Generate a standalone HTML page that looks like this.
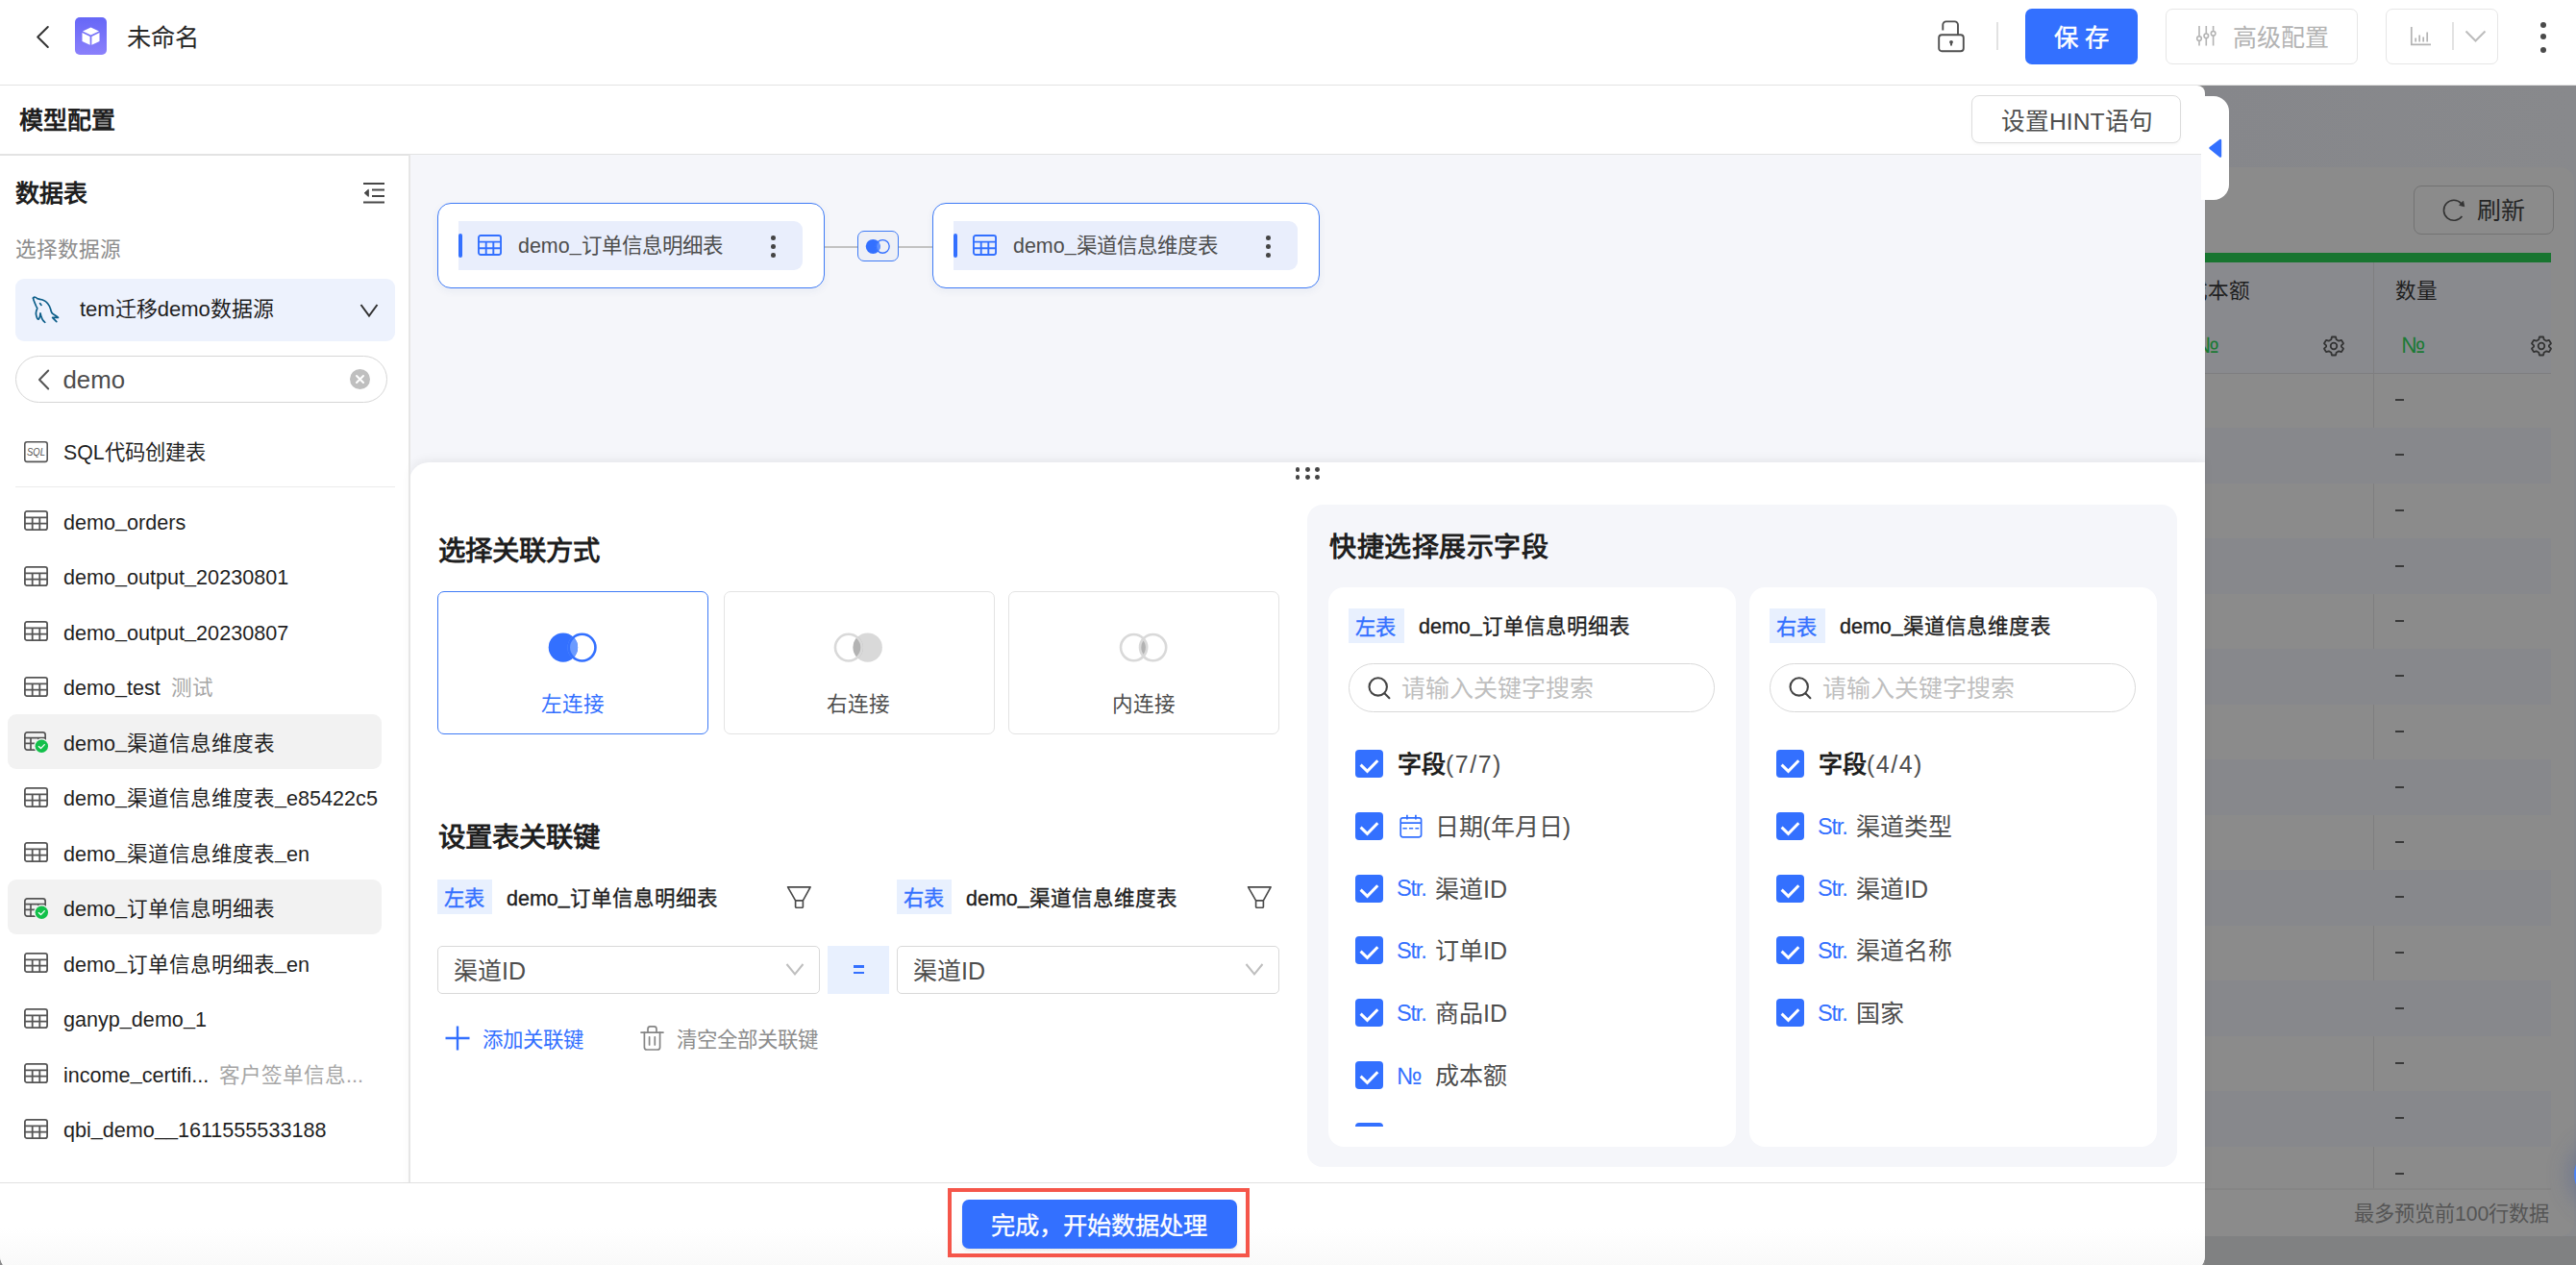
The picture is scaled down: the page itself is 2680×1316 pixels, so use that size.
<!DOCTYPE html>
<html lang="zh-CN">
<head>
<meta charset="utf-8">
<style>
*{box-sizing:border-box;margin:0;padding:0}
html,body{width:2680px;height:1316px;overflow:hidden}
body{position:relative;font-family:"Liberation Sans",sans-serif;background:#8a8a8b;color:#262626}
.a{position:absolute}
.t{position:absolute;white-space:nowrap;line-height:1}
svg{position:absolute;overflow:visible}
.u{position:relative;top:-2.5px}
</style>
</head>
<body>

<!-- ============ RIGHT DIMMED BACKGROUND ============ -->
<div class="a" id="bgright" style="left:2294px;top:89px;width:386px;height:1227px;background:#8a8a8a">
</div>
<div class="a" style="left:2294px;top:89px;width:386px;height:1227px;background:linear-gradient(90deg,#86878b,#88898c)"></div>
<div class="a" style="left:2294px;top:174px;width:384px;height:1112px;background:#8b8b8b;border-radius:0 14px 14px 0"></div>
<div class="a" style="left:2511px;top:193px;width:146px;height:51px;border-radius:8px;border:1.5px solid #737373"></div>
<svg style="left:2538px;top:204px" width="30" height="30" viewBox="0 0 30 30" fill="none" stroke="#333" stroke-width="1.6"><path d="M22.6 7.6 A10.5 10.5 0 1 0 23.4 21"/><path d="M25.8 10.8 L20.6 9.4 L24.6 5.2 Z" fill="#333" stroke-width="0.8" stroke-linejoin="round"/></svg>
<div class="t" style="left:2577px;top:207px;font-size:25px;color:#262626">刷新</div>
<div class="a" style="left:2294px;top:263px;width:360px;height:10px;background:#187530"></div>
<div class="a" style="left:2294px;top:273px;width:360px;height:115px;background:#898a8e"></div>
<div class="a" style="left:2294px;top:388px;width:360px;height:1px;background:#7e7e80"></div>
<div class="a" style="left:2469px;top:273px;width:1px;height:963px;background:#7f7f80"></div>
<div class="t" style="left:2275px;top:291.5px;font-size:21.6px;color:#1f1f1f">成本额</div>
<div class="t" style="left:2492px;top:291.5px;font-size:21.6px;color:#1f1f1f">数量</div>
<div class="t" style="left:2283.5px;top:348px;font-size:23.5px;color:#1c7a35">№</div>
<div class="t" style="left:2498px;top:348px;font-size:23.5px;color:#1c7a35">№</div>
<svg style="left:2417px;top:349px" width="22" height="22" viewBox="0 0 22 22" fill="none" stroke="#333" stroke-width="1.8" stroke-linejoin="round"><path d="M9 1.5 H13 L13.7 4.3 L16.2 5.7 L19 4.9 L21 8.3 L18.9 10.3 V11.7 L21 13.7 L19 17.1 L16.2 16.3 L13.7 17.7 L13 20.5 H9 L8.3 17.7 L5.8 16.3 L3 17.1 L1 13.7 L3.1 11.7 V10.3 L1 8.3 L3 4.9 L5.8 5.7 L8.3 4.3 Z"/><circle cx="11" cy="11" r="3.3"/></svg>
<svg style="left:2633px;top:349px" width="22" height="22" viewBox="0 0 22 22" fill="none" stroke="#333" stroke-width="1.8" stroke-linejoin="round"><path d="M9 1.5 H13 L13.7 4.3 L16.2 5.7 L19 4.9 L21 8.3 L18.9 10.3 V11.7 L21 13.7 L19 17.1 L16.2 16.3 L13.7 17.7 L13 20.5 H9 L8.3 17.7 L5.8 16.3 L3 17.1 L1 13.7 L3.1 11.7 V10.3 L1 8.3 L3 4.9 L5.8 5.7 L8.3 4.3 Z"/><circle cx="11" cy="11" r="3.3"/></svg>
<div class="a" style="left:2492px;top:415px;width:9px;height:2px;background:#3a3a3a"></div>
<div class="a" style="left:2294px;top:445.0px;width:360px;height:57.5px;background:#87888c"></div>
<div class="a" style="left:2492px;top:472px;width:9px;height:2px;background:#3a3a3a"></div>
<div class="a" style="left:2492px;top:530px;width:9px;height:2px;background:#3a3a3a"></div>
<div class="a" style="left:2294px;top:560.0px;width:360px;height:57.5px;background:#87888c"></div>
<div class="a" style="left:2492px;top:588px;width:9px;height:2px;background:#3a3a3a"></div>
<div class="a" style="left:2492px;top:645px;width:9px;height:2px;background:#3a3a3a"></div>
<div class="a" style="left:2294px;top:675.0px;width:360px;height:57.5px;background:#87888c"></div>
<div class="a" style="left:2492px;top:702px;width:9px;height:2px;background:#3a3a3a"></div>
<div class="a" style="left:2492px;top:760px;width:9px;height:2px;background:#3a3a3a"></div>
<div class="a" style="left:2294px;top:790.0px;width:360px;height:57.5px;background:#87888c"></div>
<div class="a" style="left:2492px;top:818px;width:9px;height:2px;background:#3a3a3a"></div>
<div class="a" style="left:2492px;top:875px;width:9px;height:2px;background:#3a3a3a"></div>
<div class="a" style="left:2294px;top:905.0px;width:360px;height:57.5px;background:#87888c"></div>
<div class="a" style="left:2492px;top:932px;width:9px;height:2px;background:#3a3a3a"></div>
<div class="a" style="left:2492px;top:990px;width:9px;height:2px;background:#3a3a3a"></div>
<div class="a" style="left:2294px;top:1020.0px;width:360px;height:57.5px;background:#87888c"></div>
<div class="a" style="left:2492px;top:1048px;width:9px;height:2px;background:#3a3a3a"></div>
<div class="a" style="left:2492px;top:1105px;width:9px;height:2px;background:#3a3a3a"></div>
<div class="a" style="left:2294px;top:1135.0px;width:360px;height:57.5px;background:#87888c"></div>
<div class="a" style="left:2492px;top:1162px;width:9px;height:2px;background:#3a3a3a"></div>
<div class="a" style="left:2492px;top:1220px;width:9px;height:2px;background:#3a3a3a"></div>
<div class="a" style="left:2294px;top:1236px;width:360px;height:1px;background:#7e7e7e"></div>
<div class="a" style="left:2294px;top:1236px;width:360px;height:2px;background:#858585"></div>
<div class="t" style="left:2449px;top:1252px;font-size:21.2px;color:#555">最多预览前100行数据</div>
<div class="a" style="left:2294px;top:1286px;width:386px;height:30px;background:#808182"></div>

<div class="a" style="left:2678px;top:1191.5px;width:60px;height:60px;border-radius:50%;background:#4a82f6;box-shadow:0 0 22px 6px rgba(70,90,150,0.35)"></div>

<!-- ============ TOP HEADER ============ -->
<div class="a" style="left:0;top:0;width:2680px;height:89px;background:#fff;border-bottom:1px solid #e3e3e3"></div>
<!-- back chevron -->
<svg style="left:36px;top:25px" width="18" height="28" viewBox="0 0 18 28"><path d="M13.8 3 L3.2 13.5 L13.8 24" fill="none" stroke="#333" stroke-width="2" stroke-linecap="round" stroke-linejoin="round"/></svg>
<!-- logo -->
<div class="a" style="left:78px;top:18px;width:33px;height:39px;border-radius:5px;background:linear-gradient(180deg,#6667f7 0%,#8b80fb 100%)"></div>
<svg style="left:84px;top:27px" width="21" height="21" viewBox="0 0 21 21">
 <path d="M10.5 1.5 L19 5.5 L10.5 9.5 L2 5.5 Z" fill="#fff"/>
 <path d="M1.5 7 L9.6 10.9 L9.6 19.8 L1.5 16 Z" fill="#fff"/>
 <path d="M19.5 7 L11.4 10.9 L11.4 19.8 L19.5 16 Z" fill="#fff"/>
</svg>
<div class="t" style="left:131.5px;top:26.5px;font-size:25.3px;color:#262626">未命名</div>

<!-- lock -->
<svg style="left:2014px;top:20px" width="32" height="36" viewBox="0 0 32 36" fill="none" stroke="#505050" stroke-width="1.9">
 <path d="M7.3 11.6 V5.8 A3.4 3.4 0 0 1 10.7 2.4 H19.6 A3.4 3.4 0 0 1 23 5.8 V16.2"/>
 <rect x="3.2" y="16.2" width="25.6" height="17" rx="3"/>
 <circle cx="16" cy="23.8" r="1.9" fill="#505050" stroke="none"/>
 <path d="M16 24 V27.6" stroke-width="1.9"/>
</svg>
<div class="a" style="left:2077px;top:23px;width:2px;height:29px;background:#e2e2e2"></div>
<!-- save -->
<div class="a" style="left:2107px;top:9px;width:117px;height:58px;border-radius:7px;background:#3370ff"></div>
<div class="t" style="left:2137px;top:26.5px;font-size:25.3px;color:#fff;letter-spacing:7px;-webkit-text-stroke:0.5px #fff">保存</div>
<!-- advanced config -->
<div class="a" style="left:2253px;top:9px;width:200px;height:58px;border-radius:7px;border:1.5px solid #e6e6e6;background:#fff"></div>
<svg style="left:2284px;top:26px" width="24" height="22" viewBox="0 0 24 22" fill="none" stroke="#b3b3b3" stroke-width="1.6">
 <path d="M4 1 V21.5 M11.3 1 V21.5 M18.6 1 V21.5"/>
 <circle cx="4" cy="14" r="2.3" fill="#fff"/><circle cx="11.3" cy="11.3" r="2.3" fill="#fff"/><circle cx="18.6" cy="8.8" r="2.3" fill="#fff"/>
</svg>
<div class="t" style="left:2323px;top:27px;font-size:25px;color:#b3b3b3">高级配置</div>
<!-- chart button -->
<div class="a" style="left:2482px;top:9px;width:117px;height:58px;border-radius:7px;border:1.5px solid #e6e6e6;background:#fff"></div>
<svg style="left:2507px;top:27px" width="23" height="21" viewBox="0 0 23 21" fill="none" stroke="#b3b3b3" stroke-width="1.7">
 <path d="M1.8 1 V19.3 H22"/><path d="M6.2 12.5 V16.5 M10.2 9.5 V16.5 M14.2 11.5 V16.5 M18.2 6.5 V16.5"/>
</svg>
<div class="a" style="left:2551px;top:23px;width:2px;height:29px;background:#e2e2e2"></div>
<svg style="left:2564px;top:31px" width="23" height="13" viewBox="0 0 23 13"><path d="M1.5 1.5 L11.5 11.5 L21.5 1.5" fill="none" stroke="#bdbdbd" stroke-width="2"/></svg>
<!-- more -->
<div class="a" style="left:2642.5px;top:22.5px;width:6.2px;height:6.2px;border-radius:50%;background:#4a4a4a"></div>
<div class="a" style="left:2642.5px;top:35.3px;width:6.2px;height:6.2px;border-radius:50%;background:#4a4a4a"></div>
<div class="a" style="left:2642.5px;top:48.5px;width:6.2px;height:6.2px;border-radius:50%;background:#4a4a4a"></div>

<!-- ============ DIALOG ============ -->
<div class="a" id="dlg" style="left:0;top:89px;width:2294px;height:1235px;background:#fff;border-radius:0 8px 18px 18px;overflow:hidden">
</div>
<!-- dialog header -->
<div class="t" style="left:20px;top:113px;font-size:25px;font-weight:700;color:#1f1f1f">模型配置</div>
<div class="a" style="left:2051px;top:99px;width:218px;height:50px;border-radius:8px;border:1.5px solid #dcdcdc;background:#fff;box-shadow:0 2px 3px rgba(0,0,0,0.03)"></div>
<div class="t" style="left:2082px;top:114.5px;font-size:24.7px;color:#4d4d4d">设置HINT语句</div>
<div class="a" style="left:0;top:160px;width:2290px;height:1.5px;background:#e3e3e3"></div>

<!-- canvas bg -->
<div class="a" style="left:426px;top:161px;width:1868px;height:1069px;background:#f5f6fa"></div>

<div class="a" style="left:455px;top:211px;width:403px;height:89px;border-radius:14px;border:1.5px solid #3f7bf6;background:#fff;box-shadow:0 3px 8px rgba(40,70,140,0.06)"></div>
<div class="a" style="left:477px;top:230px;width:358px;height:51px;border-radius:0 9px 9px 0;background:#e9eefc"></div>
<div class="a" style="left:477px;top:243px;width:4px;height:25px;border-radius:2px;background:#3370ff"></div>
<svg style="left:497px;top:244px" width="25" height="22" viewBox="0 0 25 22" fill="none" stroke="#3370ff" stroke-width="1.9"><rect x="0.95" y="0.95" width="23.1" height="20.1" rx="2.2"/><path d="M0.95 7.6 H24 M0.95 14.3 H24 M8.7 7.6 V21 M16.3 7.6 V21"/></svg>
<div class="t" style="left:539px;top:246px;font-size:21.45px;color:#4d4d4d">demo<span class="u">_</span>订单信息明细表</div>
<div class="a" style="left:802px;top:245px;width:4.6px;height:4.6px;border-radius:50%;background:#444"></div>
<div class="a" style="left:802px;top:254px;width:4.6px;height:4.6px;border-radius:50%;background:#444"></div>
<div class="a" style="left:802px;top:263px;width:4.6px;height:4.6px;border-radius:50%;background:#444"></div>
<div class="a" style="left:970px;top:211px;width:403px;height:89px;border-radius:14px;border:1.5px solid #3f7bf6;background:#fff;box-shadow:0 3px 8px rgba(40,70,140,0.06)"></div>
<div class="a" style="left:992px;top:230px;width:358px;height:51px;border-radius:0 9px 9px 0;background:#e9eefc"></div>
<div class="a" style="left:992px;top:243px;width:4px;height:25px;border-radius:2px;background:#3370ff"></div>
<svg style="left:1012px;top:244px" width="25" height="22" viewBox="0 0 25 22" fill="none" stroke="#3370ff" stroke-width="1.9"><rect x="0.95" y="0.95" width="23.1" height="20.1" rx="2.2"/><path d="M0.95 7.6 H24 M0.95 14.3 H24 M8.7 7.6 V21 M16.3 7.6 V21"/></svg>
<div class="t" style="left:1054px;top:246px;font-size:21.45px;color:#4d4d4d">demo<span class="u">_</span>渠道信息维度表</div>
<div class="a" style="left:1317px;top:245px;width:4.6px;height:4.6px;border-radius:50%;background:#444"></div>
<div class="a" style="left:1317px;top:254px;width:4.6px;height:4.6px;border-radius:50%;background:#444"></div>
<div class="a" style="left:1317px;top:263px;width:4.6px;height:4.6px;border-radius:50%;background:#444"></div>
<div class="a" style="left:858px;top:256px;width:112px;height:1.5px;background:#c2c2c2"></div>
<div class="a" style="left:892px;top:240px;width:43px;height:32px;border-radius:7px;border:1.5px solid #3f7bf6;background:#eef0f6"></div>
<svg style="left:895px;top:243px" width="34" height="28" viewBox="0 0 34 28"><defs><clipPath id="cj"><circle cx="13.3" cy="13.4" r="7.5"/></clipPath></defs><circle cx="13.3" cy="13.4" r="7.5" fill="#3370ff"/><circle cx="23.3" cy="13.4" r="7.5" fill="#5d90ff" clip-path="url(#cj)"/><circle cx="23.3" cy="13.4" r="6.85" fill="none" stroke="#3370ff" stroke-width="1.3"/></svg>
<div class="a" style="left:426px;top:481px;width:1868px;height:760px;border-radius:20px 0 0 0;background:#fff;box-shadow:0 -4px 10px rgba(0,0,0,0.05)"></div>
<div class="a" style="left:1347.50px;top:485.8px;width:4.8px;height:4.8px;border-radius:50%;background:#444"></div>
<div class="a" style="left:1357.95px;top:485.8px;width:4.8px;height:4.8px;border-radius:50%;background:#444"></div>
<div class="a" style="left:1368.40px;top:485.8px;width:4.8px;height:4.8px;border-radius:50%;background:#444"></div>
<div class="a" style="left:1347.50px;top:494.0px;width:4.8px;height:4.8px;border-radius:50%;background:#444"></div>
<div class="a" style="left:1357.95px;top:494.0px;width:4.8px;height:4.8px;border-radius:50%;background:#444"></div>
<div class="a" style="left:1368.40px;top:494.0px;width:4.8px;height:4.8px;border-radius:50%;background:#444"></div>
<div class="t" style="left:455.5px;top:559px;font-size:28.4px;font-weight:700;color:#1f1f1f">选择关联方式</div>
<div class="a" style="left:455px;top:615px;width:282px;height:149px;border-radius:7px;border:1.5px solid #3f7bf6;background:#fff"></div>
<div class="t" style="left:562.5px;top:721.5px;font-size:21.6px;color:#3370ff">左连接</div>
<div class="a" style="left:752.5px;top:615px;width:282px;height:149px;border-radius:7px;border:1.5px solid #e3e3e3;background:#fff"></div>
<div class="t" style="left:860.0px;top:721.5px;font-size:21.6px;color:#4d4d4d">右连接</div>
<div class="a" style="left:1049px;top:615px;width:282px;height:149px;border-radius:7px;border:1.5px solid #e3e3e3;background:#fff"></div>
<div class="t" style="left:1156.5px;top:721.5px;font-size:21.6px;color:#4d4d4d">内连接</div>
<svg style="left:560px;top:648px" width="70" height="52" viewBox="0 0 70 52"><defs><clipPath id="v1"><circle cx="25.9" cy="25.6" r="15.2"/></clipPath></defs><circle cx="25.9" cy="25.6" r="15.2" fill="#3370ff"/><circle cx="45.6" cy="25.6" r="15.15" fill="#6b9bff" clip-path="url(#v1)"/><circle cx="45.6" cy="25.6" r="13.85" fill="none" stroke="#3370ff" stroke-width="2.6"/></svg>
<svg style="left:857px;top:648px" width="70" height="52" viewBox="0 0 70 52"><defs><clipPath id="v2"><circle cx="45.7" cy="25.6" r="15.2"/></clipPath></defs><circle cx="45.7" cy="25.6" r="15.2" fill="#d9d9d9"/><circle cx="25.8" cy="25.6" r="15.15" fill="#b3b3b3" clip-path="url(#v2)"/><circle cx="25.8" cy="25.6" r="13.85" fill="none" stroke="#d9d9d9" stroke-width="2.6"/></svg>
<svg style="left:1155px;top:648px" width="70" height="52" viewBox="0 0 70 52"><defs><clipPath id="v3"><circle cx="44.6" cy="25.6" r="13.9"/></clipPath></defs><circle cx="24.6" cy="25.6" r="13.9" fill="#b3b3b3" clip-path="url(#v3)"/><circle cx="24.6" cy="25.6" r="13.6" fill="none" stroke="#d9d9d9" stroke-width="2.6"/><circle cx="44.6" cy="25.6" r="13.6" fill="none" stroke="#d9d9d9" stroke-width="2.6"/></svg>
<div class="t" style="left:456px;top:856.5px;font-size:28.4px;font-weight:700;color:#1f1f1f">设置表关联键</div>
<div class="a" style="left:455px;top:915px;width:57px;height:36px;background:#e8f0fe"></div>
<div class="t" style="left:462px;top:924.0px;font-size:21.2px;color:#3370ff;-webkit-text-stroke:0.4px #3370ff">左表</div>
<div class="t" style="left:527px;top:925.0px;font-size:21.5px;color:#1f1f1f;-webkit-text-stroke:0.35px #1f1f1f">demo<span class="u">_</span>订单信息明细表</div>
<svg style="left:818px;top:920px" width="26" height="26" viewBox="0 0 26 26" fill="none" stroke="#4a4a4a" stroke-width="1.65" stroke-linejoin="round"><path d="M1.6 2.8 H25.1 L17.4 16.8 V23.6 A0.6 0.6 0 0 1 16.8 24.2 H10.2 A0.6 0.6 0 0 1 9.6 23.6 V16.8 Z M9.6 16.8 H17.4"/></svg>
<div class="a" style="left:933px;top:915px;width:57px;height:36px;background:#e8f0fe"></div>
<div class="t" style="left:940px;top:924.0px;font-size:21.2px;color:#3370ff;-webkit-text-stroke:0.4px #3370ff">右表</div>
<div class="t" style="left:1005px;top:925.0px;font-size:21.5px;color:#1f1f1f;-webkit-text-stroke:0.35px #1f1f1f">demo<span class="u">_</span>渠道信息维度表</div>
<svg style="left:1297px;top:920px" width="26" height="26" viewBox="0 0 26 26" fill="none" stroke="#4a4a4a" stroke-width="1.65" stroke-linejoin="round"><path d="M1.6 2.8 H25.1 L17.4 16.8 V23.6 A0.6 0.6 0 0 1 16.8 24.2 H10.2 A0.6 0.6 0 0 1 9.6 23.6 V16.8 Z M9.6 16.8 H17.4"/></svg>
<div class="a" style="left:455px;top:984px;width:398px;height:50px;border-radius:5px;border:1.5px solid #d9d9d9;background:#fff"></div>
<div class="t" style="left:472.0px;top:998px;font-size:25px;color:#4d4d4d">渠道ID</div>
<svg style="left:817px;top:1001px" width="20" height="15" viewBox="0 0 20 15"><path d="M1.5 2 L10 12.5 L18.5 2" fill="none" stroke="#bfbfbf" stroke-width="2"/></svg>
<div class="a" style="left:933px;top:984px;width:398px;height:50px;border-radius:5px;border:1.5px solid #d9d9d9;background:#fff"></div>
<div class="t" style="left:950.0px;top:998px;font-size:25px;color:#4d4d4d">渠道ID</div>
<svg style="left:1295px;top:1001px" width="20" height="15" viewBox="0 0 20 15"><path d="M1.5 2 L10 12.5 L18.5 2" fill="none" stroke="#bfbfbf" stroke-width="2"/></svg>
<div class="a" style="left:861px;top:984px;width:64px;height:50px;background:#e8f0fe"></div>
<div class="a" style="left:887.5px;top:1004px;width:11px;height:2.5px;background:#3370ff"></div><div class="a" style="left:887.5px;top:1010.5px;width:11px;height:2.5px;background:#3370ff"></div>
<svg style="left:462px;top:1066px" width="28" height="28" viewBox="0 0 28 28"><path d="M14 1.5 V26.5 M1.5 14 H26.5" stroke="#3370ff" stroke-width="2.4"/></svg>
<div class="t" style="left:501.5px;top:1072px;font-size:21.4px;color:#3370ff">添加关联键</div>
<svg style="left:655px;top:1060px" width="45" height="40" viewBox="0 0 45 40" fill="none" stroke="#858585" stroke-width="1.7" stroke-linecap="round"><path d="M12 14.1 H35"/><path d="M19 14 V10.5 A2.6 2.6 0 0 1 21.6 7.9 H25.4 A2.6 2.6 0 0 1 28 10.5 V14"/><path d="M15.4 14.1 V29.4 A2.6 2.6 0 0 0 18 32 H29 A2.6 2.6 0 0 0 31.6 29.4 V14.1"/><path d="M20.6 18.8 V27 M26.3 18.8 V27"/></svg>
<div class="t" style="left:704px;top:1072px;font-size:21.4px;color:#8c8c8c">清空全部关联键</div>
<div class="a" style="left:1360px;top:525px;width:905px;height:689px;border-radius:16px;background:#f5f6fa"></div>
<div class="t" style="left:1383px;top:556px;font-size:28px;letter-spacing:0.5px;font-weight:700;color:#1f1f1f">快捷选择展示字段</div>
<div class="a" style="left:1382px;top:611px;width:424px;height:582px;border-radius:16px;background:#fff;overflow:hidden" id="card左表">
</div>
<div class="a" style="left:1403px;top:633px;width:58px;height:36px;background:#e8f0fe"></div>
<div class="t" style="left:1410px;top:642.0px;font-size:21.2px;color:#3370ff;-webkit-text-stroke:0.4px #3370ff">左表</div>
<div class="t" style="left:1476px;top:642.0px;font-size:21.5px;color:#1f1f1f;-webkit-text-stroke:0.35px #1f1f1f">demo<span class="u">_</span>订单信息明细表</div>
<div class="a" style="left:1403px;top:690px;width:381px;height:51px;border-radius:26px;border:1.5px solid #d9d9d9;background:#fff"></div>
<svg style="left:1422px;top:703px" width="25" height="25" viewBox="0 0 25 25" fill="none" stroke="#444" stroke-width="2.1" stroke-linecap="round"><circle cx="11.7" cy="11.4" r="9.2"/><path d="M18.6 18.4 L23.4 23.2"/></svg>
<div class="t" style="left:1458px;top:704px;font-size:25px;color:#bfbfbf">请输入关键字搜索</div>
<div class="a" style="left:1410px;top:780px;width:29px;height:29px;border-radius:4px;background:#3370ff"></div><svg style="left:1410px;top:780px" width="29" height="29" viewBox="0 0 29 29"><path d="M5.6 15.6 L12.5 22.3 L23.3 11.2" fill="none" stroke="#fff" stroke-width="3"/></svg>
<div class="t" style="left:1454px;top:783px;font-size:25px;color:#1f1f1f"><b style="font-weight:700">字段</b><span style="color:#4d4d4d;letter-spacing:1.5px">(7/7)</span></div>
<div class="a" style="left:1410px;top:845.0px;width:29px;height:29px;border-radius:4px;background:#3370ff"></div><svg style="left:1410px;top:845.0px" width="29" height="29" viewBox="0 0 29 29"><path d="M5.6 15.6 L12.5 22.3 L23.3 11.2" fill="none" stroke="#fff" stroke-width="3"/></svg>
<svg style="left:1456px;top:847.0px" width="25" height="25" viewBox="0 0 25 25" fill="none" stroke="#3370ff" stroke-width="1.7"><rect x="1.2" y="3.9" width="21.4" height="19.9" rx="2.2"/><path d="M1.2 9.2 H22.6 M7.9 0.8 V5.6 M16.9 0.8 V5.6"/><path d="M3.4 14.8 H7.8 M10 14.8 H14.2 M16.4 14.8 H20.2" stroke-width="1.5"/></svg>
<div class="t" style="left:1492.5px;top:848.0px;font-size:25px;color:#4d4d4d">日期(年月日)</div>
<div class="a" style="left:1410px;top:909.7px;width:29px;height:29px;border-radius:4px;background:#3370ff"></div><svg style="left:1410px;top:909.7px" width="29" height="29" viewBox="0 0 29 29"><path d="M5.6 15.6 L12.5 22.3 L23.3 11.2" fill="none" stroke="#fff" stroke-width="3"/></svg>
<div class="t" style="left:1453px;top:913.2px;font-size:23.5px;color:#3370ff;letter-spacing:-1.2px">Str.</div>
<div class="t" style="left:1493.0px;top:912.7px;font-size:25px;color:#4d4d4d">渠道ID</div>
<div class="a" style="left:1410px;top:974.4px;width:29px;height:29px;border-radius:4px;background:#3370ff"></div><svg style="left:1410px;top:974.4px" width="29" height="29" viewBox="0 0 29 29"><path d="M5.6 15.6 L12.5 22.3 L23.3 11.2" fill="none" stroke="#fff" stroke-width="3"/></svg>
<div class="t" style="left:1453px;top:977.9px;font-size:23.5px;color:#3370ff;letter-spacing:-1.2px">Str.</div>
<div class="t" style="left:1493.0px;top:977.4px;font-size:25px;color:#4d4d4d">订单ID</div>
<div class="a" style="left:1410px;top:1039.1px;width:29px;height:29px;border-radius:4px;background:#3370ff"></div><svg style="left:1410px;top:1039.1px" width="29" height="29" viewBox="0 0 29 29"><path d="M5.6 15.6 L12.5 22.3 L23.3 11.2" fill="none" stroke="#fff" stroke-width="3"/></svg>
<div class="t" style="left:1453px;top:1042.6px;font-size:23.5px;color:#3370ff;letter-spacing:-1.2px">Str.</div>
<div class="t" style="left:1493.0px;top:1042.1px;font-size:25px;color:#4d4d4d">商品ID</div>
<div class="a" style="left:1410px;top:1103.8px;width:29px;height:29px;border-radius:4px;background:#3370ff"></div><svg style="left:1410px;top:1103.8px" width="29" height="29" viewBox="0 0 29 29"><path d="M5.6 15.6 L12.5 22.3 L23.3 11.2" fill="none" stroke="#fff" stroke-width="3"/></svg>
<div class="t" style="left:1453px;top:1106.8px;font-size:25px;color:#3370ff;letter-spacing:-1px">№</div>
<div class="t" style="left:1493.0px;top:1106.8px;font-size:25px;color:#4d4d4d">成本额</div>
<div class="a" style="left:1820px;top:611px;width:424px;height:582px;border-radius:16px;background:#fff;overflow:hidden" id="card右表">
</div>
<div class="a" style="left:1841px;top:633px;width:58px;height:36px;background:#e8f0fe"></div>
<div class="t" style="left:1848px;top:642.0px;font-size:21.2px;color:#3370ff;-webkit-text-stroke:0.4px #3370ff">右表</div>
<div class="t" style="left:1914px;top:642.0px;font-size:21.5px;color:#1f1f1f;-webkit-text-stroke:0.35px #1f1f1f">demo<span class="u">_</span>渠道信息维度表</div>
<div class="a" style="left:1841px;top:690px;width:381px;height:51px;border-radius:26px;border:1.5px solid #d9d9d9;background:#fff"></div>
<svg style="left:1860px;top:703px" width="25" height="25" viewBox="0 0 25 25" fill="none" stroke="#444" stroke-width="2.1" stroke-linecap="round"><circle cx="11.7" cy="11.4" r="9.2"/><path d="M18.6 18.4 L23.4 23.2"/></svg>
<div class="t" style="left:1896px;top:704px;font-size:25px;color:#bfbfbf">请输入关键字搜索</div>
<div class="a" style="left:1848px;top:780px;width:29px;height:29px;border-radius:4px;background:#3370ff"></div><svg style="left:1848px;top:780px" width="29" height="29" viewBox="0 0 29 29"><path d="M5.6 15.6 L12.5 22.3 L23.3 11.2" fill="none" stroke="#fff" stroke-width="3"/></svg>
<div class="t" style="left:1892px;top:783px;font-size:25px;color:#1f1f1f"><b style="font-weight:700">字段</b><span style="color:#4d4d4d;letter-spacing:1.5px">(4/4)</span></div>
<div class="a" style="left:1848px;top:845.0px;width:29px;height:29px;border-radius:4px;background:#3370ff"></div><svg style="left:1848px;top:845.0px" width="29" height="29" viewBox="0 0 29 29"><path d="M5.6 15.6 L12.5 22.3 L23.3 11.2" fill="none" stroke="#fff" stroke-width="3"/></svg>
<div class="t" style="left:1891px;top:848.5px;font-size:23.5px;color:#3370ff;letter-spacing:-1.2px">Str.</div>
<div class="t" style="left:1931.0px;top:848.0px;font-size:25px;color:#4d4d4d">渠道类型</div>
<div class="a" style="left:1848px;top:909.7px;width:29px;height:29px;border-radius:4px;background:#3370ff"></div><svg style="left:1848px;top:909.7px" width="29" height="29" viewBox="0 0 29 29"><path d="M5.6 15.6 L12.5 22.3 L23.3 11.2" fill="none" stroke="#fff" stroke-width="3"/></svg>
<div class="t" style="left:1891px;top:913.2px;font-size:23.5px;color:#3370ff;letter-spacing:-1.2px">Str.</div>
<div class="t" style="left:1931.0px;top:912.7px;font-size:25px;color:#4d4d4d">渠道ID</div>
<div class="a" style="left:1848px;top:974.4px;width:29px;height:29px;border-radius:4px;background:#3370ff"></div><svg style="left:1848px;top:974.4px" width="29" height="29" viewBox="0 0 29 29"><path d="M5.6 15.6 L12.5 22.3 L23.3 11.2" fill="none" stroke="#fff" stroke-width="3"/></svg>
<div class="t" style="left:1891px;top:977.9px;font-size:23.5px;color:#3370ff;letter-spacing:-1.2px">Str.</div>
<div class="t" style="left:1931.0px;top:977.4px;font-size:25px;color:#4d4d4d">渠道名称</div>
<div class="a" style="left:1848px;top:1039.1px;width:29px;height:29px;border-radius:4px;background:#3370ff"></div><svg style="left:1848px;top:1039.1px" width="29" height="29" viewBox="0 0 29 29"><path d="M5.6 15.6 L12.5 22.3 L23.3 11.2" fill="none" stroke="#fff" stroke-width="3"/></svg>
<div class="t" style="left:1891px;top:1042.6px;font-size:23.5px;color:#3370ff;letter-spacing:-1.2px">Str.</div>
<div class="t" style="left:1931.0px;top:1042.1px;font-size:25px;color:#4d4d4d">国家</div>
<div class="a" style="left:1410px;top:1168px;width:29px;height:4px;border-radius:4px 4px 0 0;background:#3370ff"></div>
<div class="a" style="left:0;top:1230px;width:2294px;height:86px;background:linear-gradient(180deg,#fff 0%,#fff 50%,#f8f8f8 100%);border-top:1px solid #e0e0e0;border-radius:0 0 18px 18px;height:94px"></div>
<div class="a" style="left:986px;top:1236px;width:314px;height:72px;border:4.5px solid #f5564a"></div>
<div class="a" style="left:1001px;top:1248px;width:286px;height:51px;border-radius:7px;background:#3370ff;box-shadow:0 2px 3px rgba(0,0,0,0.08)"></div>
<div class="t" style="left:1031px;top:1263px;font-size:25.3px;color:#fff;-webkit-text-stroke:0.3px #fff">完成，开始数据处理</div>
<div class="a" style="left:2290px;top:100px;width:29px;height:108px;border-radius:0 16px 16px 0;background:#fff"></div>
<svg style="left:2296px;top:143px" width="17" height="23" viewBox="0 0 17 23"><path d="M14 3 L3.5 11 L14 19.5 Z" fill="#3370ff" stroke="#3370ff" stroke-width="2.4" stroke-linejoin="round"/></svg>
<!-- sidebar -->
<div class="a" style="left:425px;top:161px;width:1.5px;height:1069px;background:#e6e6e6"></div>
<div class="t" style="left:16px;top:189px;font-size:25px;font-weight:700;color:#1f1f1f">数据表</div>
<svg style="left:377px;top:188.6px" width="25" height="24" viewBox="0 0 25 24" fill="none" stroke="#474747" stroke-width="2.1">
 <path d="M1 2 H23 M10 8.5 H23 M10 15 H23 M1 21.5 H23"/><path d="M6.3 8.2 L2.2 11.8 L6.3 15.4 Z" fill="#474747" stroke-width="1"/>
</svg>
<div class="t" style="left:16px;top:249px;font-size:21.6px;color:#8c8c8c">选择数据源</div>
<div class="a" style="left:16px;top:290px;width:395px;height:65px;border-radius:9px;background:#edf2fd"></div>
<svg style="left:28px;top:302px" width="40" height="40" viewBox="0 0 40 40" fill="none" stroke="#0e5f8a" stroke-width="1.7" stroke-linecap="round" stroke-linejoin="round">
 <path d="M6.5 8 C7.5 6.8 9.5 7 10.6 8.6 C12.5 9.6 14.5 9 17 10.2 C20.5 11.6 23.2 15 24.6 19.5 C25.4 22.2 25.3 23.6 27 24.6 C29 25.8 31 26.8 32.5 28.4 L26.6 28.3 L30.8 32.6"/>
 <path d="M6.5 8 C6.6 10.5 8.6 13.6 9.6 16.5 C10.1 17.8 11.2 18.2 10.6 19.5 C9.4 21.6 9.2 25.4 10.4 28.4 C11 30 12 30.6 12.6 29.6 C13.6 28 13.9 26 14 23.8 L14.6 26.4 C15.4 29.6 17 32.2 18.8 33.4"/>
 <path d="M13.6 13.6 L15 15.4"/>
</svg>
<div class="t" style="left:83px;top:311px;font-size:22px;color:#1f1f1f">tem迁移demo数据源</div>
<svg style="left:374px;top:315px" width="20" height="16" viewBox="0 0 20 16"><path d="M1.5 2 L10 13.5 L18.5 2" fill="none" stroke="#333" stroke-width="2"/></svg>
<div class="a" style="left:16px;top:370px;width:387px;height:49px;border-radius:25px;border:1.5px solid #d6d6d6;background:#fff"></div>
<svg style="left:38px;top:383px" width="15" height="24" viewBox="0 0 15 24"><path d="M12.2 2.5 L3 12 L12.2 21.5" fill="none" stroke="#555" stroke-width="2" stroke-linecap="round" stroke-linejoin="round"/></svg>
<div class="t" style="left:65.5px;top:382.5px;font-size:25.8px;color:#4d4d4d">demo</div>
<div class="a" style="left:364px;top:384px;width:21px;height:21px;border-radius:50%;background:#bfbfbf"></div>
<svg style="left:364px;top:384px" width="21" height="21" viewBox="0 0 21 21"><path d="M7 7 L14 14 M14 7 L7 14" stroke="#fff" stroke-width="2" stroke-linecap="round"/></svg>

<!-- list -->
<svg style="left:25px;top:459px" width="25" height="23" viewBox="0 0 25 23"><rect x="0.8" y="0.8" width="23.4" height="20.6" rx="2.3" fill="none" stroke="#555" stroke-width="1.6"/><text x="12.5" y="14.9" font-family="Liberation Sans" font-style="italic" font-size="11.2" fill="#555" text-anchor="middle" textLength="19" lengthAdjust="spacingAndGlyphs">SQL</text></svg>
<div class="t" style="left:66px;top:461px;font-size:21.3px;color:#1f1f1f">SQL代码创建表</div>
<div class="a" style="left:16px;top:505.5px;width:395px;height:1.5px;background:#ececec"></div>
<svg style="left:25px;top:531.0px" width="25" height="21" viewBox="0 0 25 21" fill="none" stroke="#555" stroke-width="1.8"><rect x="0.9" y="0.9" width="23.2" height="19.2" rx="2.2"/><path d="M0.9 7.3 H24.1 M0.9 13.7 H24.1 M8.7 7.3 V20 M16.3 7.3 V20"/></svg>
<div class="t" style="left:66px;top:532.5px;font-size:21.6px;color:#1f1f1f">demo<span class="u">_</span>orders</div>
<svg style="left:25px;top:588.5px" width="25" height="21" viewBox="0 0 25 21" fill="none" stroke="#555" stroke-width="1.8"><rect x="0.9" y="0.9" width="23.2" height="19.2" rx="2.2"/><path d="M0.9 7.3 H24.1 M0.9 13.7 H24.1 M8.7 7.3 V20 M16.3 7.3 V20"/></svg>
<div class="t" style="left:66px;top:590.0px;font-size:21.6px;color:#1f1f1f">demo<span class="u">_</span>output<span class="u">_</span>20230801</div>
<svg style="left:25px;top:646.0px" width="25" height="21" viewBox="0 0 25 21" fill="none" stroke="#555" stroke-width="1.8"><rect x="0.9" y="0.9" width="23.2" height="19.2" rx="2.2"/><path d="M0.9 7.3 H24.1 M0.9 13.7 H24.1 M8.7 7.3 V20 M16.3 7.3 V20"/></svg>
<div class="t" style="left:66px;top:647.5px;font-size:21.6px;color:#1f1f1f">demo<span class="u">_</span>output<span class="u">_</span>20230807</div>
<svg style="left:25px;top:703.5px" width="25" height="21" viewBox="0 0 25 21" fill="none" stroke="#555" stroke-width="1.8"><rect x="0.9" y="0.9" width="23.2" height="19.2" rx="2.2"/><path d="M0.9 7.3 H24.1 M0.9 13.7 H24.1 M8.7 7.3 V20 M16.3 7.3 V20"/></svg>
<div class="t" style="left:66px;top:705.0px;font-size:21.6px;color:#1f1f1f">demo<span class="u">_</span>test</div>
<div class="t" style="left:178px;top:705.0px;font-size:21.6px;color:#a6a6a6">测试</div>
<div class="a" style="left:8px;top:742.5px;width:389px;height:57px;border-radius:9px;background:#f2f2f2"></div>
<svg style="left:25px;top:761.2px" width="26" height="24" viewBox="0 0 26 24" fill="none" stroke="#555" stroke-width="1.7"><rect x="0.85" y="0.85" width="21.3" height="18.3" rx="2.6"/><path d="M0.85 6.7 H22.2 M0.85 12.4 H22.2 M7 6.7 V19.2 M15 6.7 V19.2"/><circle cx="18.3" cy="15.3" r="8.1" fill="#f2f2f2" stroke="none"/><circle cx="18.3" cy="15.3" r="6.7" fill="#12c04a" stroke="none"/><path d="M15.3 15.6 L17.5 17.6 L21.3 13.6" stroke="#fff" stroke-width="1.3" stroke-linecap="round" stroke-linejoin="round"/></svg>
<div class="t" style="left:66px;top:762.5px;font-size:21.6px;color:#1f1f1f">demo<span class="u">_</span>渠道信息维度表</div>
<svg style="left:25px;top:818.5px" width="25" height="21" viewBox="0 0 25 21" fill="none" stroke="#555" stroke-width="1.8"><rect x="0.9" y="0.9" width="23.2" height="19.2" rx="2.2"/><path d="M0.9 7.3 H24.1 M0.9 13.7 H24.1 M8.7 7.3 V20 M16.3 7.3 V20"/></svg>
<div class="t" style="left:66px;top:820.0px;font-size:21.6px;color:#1f1f1f">demo<span class="u">_</span>渠道信息维度表<span class="u">_</span>e85422c5</div>
<svg style="left:25px;top:876.0px" width="25" height="21" viewBox="0 0 25 21" fill="none" stroke="#555" stroke-width="1.8"><rect x="0.9" y="0.9" width="23.2" height="19.2" rx="2.2"/><path d="M0.9 7.3 H24.1 M0.9 13.7 H24.1 M8.7 7.3 V20 M16.3 7.3 V20"/></svg>
<div class="t" style="left:66px;top:877.5px;font-size:21.6px;color:#1f1f1f">demo<span class="u">_</span>渠道信息维度表<span class="u">_</span>en</div>
<div class="a" style="left:8px;top:915.0px;width:389px;height:57px;border-radius:9px;background:#f2f2f2"></div>
<svg style="left:25px;top:933.7px" width="26" height="24" viewBox="0 0 26 24" fill="none" stroke="#555" stroke-width="1.7"><rect x="0.85" y="0.85" width="21.3" height="18.3" rx="2.6"/><path d="M0.85 6.7 H22.2 M0.85 12.4 H22.2 M7 6.7 V19.2 M15 6.7 V19.2"/><circle cx="18.3" cy="15.3" r="8.1" fill="#f2f2f2" stroke="none"/><circle cx="18.3" cy="15.3" r="6.7" fill="#12c04a" stroke="none"/><path d="M15.3 15.6 L17.5 17.6 L21.3 13.6" stroke="#fff" stroke-width="1.3" stroke-linecap="round" stroke-linejoin="round"/></svg>
<div class="t" style="left:66px;top:935.0px;font-size:21.6px;color:#1f1f1f">demo<span class="u">_</span>订单信息明细表</div>
<svg style="left:25px;top:991.0px" width="25" height="21" viewBox="0 0 25 21" fill="none" stroke="#555" stroke-width="1.8"><rect x="0.9" y="0.9" width="23.2" height="19.2" rx="2.2"/><path d="M0.9 7.3 H24.1 M0.9 13.7 H24.1 M8.7 7.3 V20 M16.3 7.3 V20"/></svg>
<div class="t" style="left:66px;top:992.5px;font-size:21.6px;color:#1f1f1f">demo<span class="u">_</span>订单信息明细表<span class="u">_</span>en</div>
<svg style="left:25px;top:1048.5px" width="25" height="21" viewBox="0 0 25 21" fill="none" stroke="#555" stroke-width="1.8"><rect x="0.9" y="0.9" width="23.2" height="19.2" rx="2.2"/><path d="M0.9 7.3 H24.1 M0.9 13.7 H24.1 M8.7 7.3 V20 M16.3 7.3 V20"/></svg>
<div class="t" style="left:66px;top:1050.0px;font-size:21.6px;color:#1f1f1f">ganyp<span class="u">_</span>demo<span class="u">_</span>1</div>
<svg style="left:25px;top:1106.0px" width="25" height="21" viewBox="0 0 25 21" fill="none" stroke="#555" stroke-width="1.8"><rect x="0.9" y="0.9" width="23.2" height="19.2" rx="2.2"/><path d="M0.9 7.3 H24.1 M0.9 13.7 H24.1 M8.7 7.3 V20 M16.3 7.3 V20"/></svg>
<div class="t" style="left:66px;top:1107.5px;font-size:21.6px;color:#1f1f1f">income<span class="u">_</span>certifi...</div>
<div class="t" style="left:228px;top:1107.5px;font-size:21.6px;color:#a6a6a6">客户签单信息...</div>
<svg style="left:25px;top:1163.5px" width="25" height="21" viewBox="0 0 25 21" fill="none" stroke="#555" stroke-width="1.8"><rect x="0.9" y="0.9" width="23.2" height="19.2" rx="2.2"/><path d="M0.9 7.3 H24.1 M0.9 13.7 H24.1 M8.7 7.3 V20 M16.3 7.3 V20"/></svg>
<div class="t" style="left:66px;top:1165.0px;font-size:21.6px;color:#1f1f1f">qbi<span class="u">_</span>demo<span class="u">_</span><span class="u">_</span>1611555533188</div>

</body>
</html>
